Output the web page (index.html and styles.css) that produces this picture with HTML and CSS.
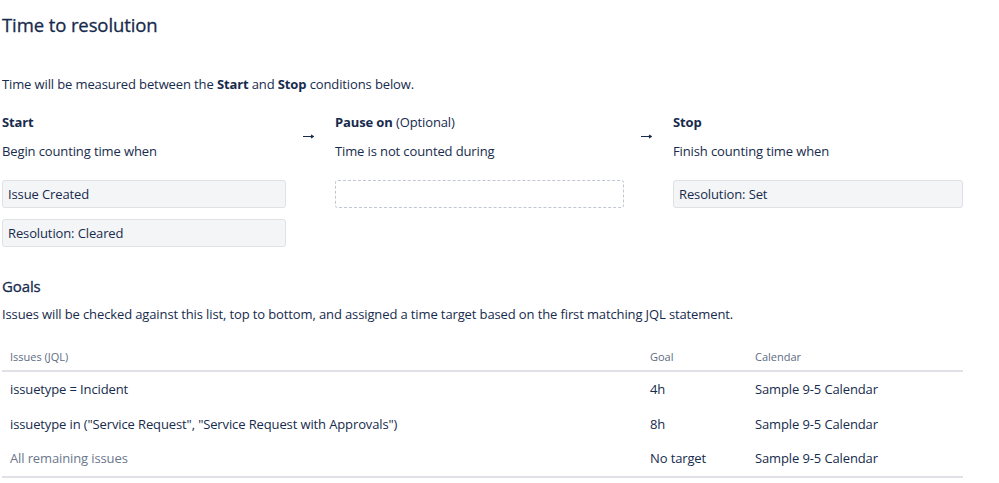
FILE: index.html
```html
<!DOCTYPE html>
<html>
<head>
<meta charset="utf-8">
<link rel="stylesheet" href="styles.css">
</head>
<body>
<div class="page">
  <h1 class="title">Time to resolution</h1>
  <p class="intro">Time will be measured between the <b>Start</b> and <b>Stop</b> conditions below.</p>

  <div class="conditions">
    <div class="col">
      <div class="label"><b>Start</b></div>
      <div class="sub">Begin counting time when</div>
      <div class="boxes">
        <div class="box">Issue Created</div>
        <div class="box">Resolution: Cleared</div>
      </div>
    </div>
    <div class="arrow"><svg width="11" height="5" viewBox="0 0 11 5"><path d="M0 2.5H10M8 1L10.3 2.5L8 4" fill="none" stroke="#172b4d" stroke-width="1.1"/></svg></div>
    <div class="col">
      <div class="label"><b>Pause on</b> (Optional)</div>
      <div class="sub">Time is not counted during</div>
      <div class="boxes">
        <div class="box empty"></div>
      </div>
    </div>
    <div class="arrow"><svg width="11" height="5" viewBox="0 0 11 5"><path d="M0 2.5H10M8 1L10.3 2.5L8 4" fill="none" stroke="#172b4d" stroke-width="1.1"/></svg></div>
    <div class="col">
      <div class="label"><b>Stop</b></div>
      <div class="sub">Finish counting time when</div>
      <div class="boxes">
        <div class="box">Resolution: Set</div>
      </div>
    </div>
  </div>

  <h2 class="goals-title">Goals</h2>
  <p class="goals-desc">Issues will be checked against this list, top to bottom, and assigned a time target based on the first matching JQL statement.</p>

  <table class="goals">
    <thead>
      <tr>
        <th class="c-jql">Issues (JQL)</th>
        <th class="c-goal">Goal</th>
        <th class="c-cal">Calendar</th>
      </tr>
    </thead>
    <tbody>
      <tr>
        <td>issuetype = Incident</td>
        <td>4h</td>
        <td>Sample 9-5 Calendar</td>
      </tr>
      <tr>
        <td>issuetype in ("Service Request", "Service Request with Approvals")</td>
        <td>8h</td>
        <td>Sample 9-5 Calendar</td>
      </tr>
      <tr class="last">
        <td class="muted">All remaining issues</td>
        <td>No target</td>
        <td>Sample 9-5 Calendar</td>
      </tr>
    </tbody>
  </table>
</div>
</body>
</html>
```

FILE: styles.css
```css
* { box-sizing: border-box; }
html, body {
  margin: 0;
  padding: 0;
  background: #fff;
}
body {
  font-family: "Open Sans", "Noto Sans", sans-serif;
  font-size: 13px;
  letter-spacing: -0.12px;
  color: #172b4d;
}
.page {
  padding: 0 2px;
  width: 965px;
}
.title {
  margin: 0;
  padding-top: 13px;
  font-size: 18.5px;
  line-height: 24px;
  font-weight: 400;
  letter-spacing: -0.1px;
  -webkit-text-stroke: 0.3px #172b4d;
  color: #172b4d;
}
.intro {
  margin: 37px 0 0;
  line-height: 20px;
}
b { font-weight: 700; }
.conditions {
  margin-top: 18px;
  display: grid;
  grid-template-columns: 284px 49px 289px 49px 290px;
}
.label, .sub {
  line-height: 20px;
}
.sub {
  margin-top: 9px;
}
.arrow {
  padding-top: 22px;
  padding-left: 17px;
  line-height: 0;
}
.boxes {
  margin-top: 19px;
  display: flex;
  flex-direction: column;
  gap: 11px;
}
.box {
  height: 28px;
  border: 1px solid #dfe1e6;
  border-radius: 3px;
  background: #f4f5f7;
  padding: 0 5px;
  line-height: 26px;
}
.box.empty {
  background: #fff;
  border: 1px dashed #c1c7d0;
}
.goals-title {
  margin: 29px 0 0;
  font-size: 15px;
  line-height: 20px;
  font-weight: 400;
  -webkit-text-stroke: 0.3px #172b4d;
}
.goals-desc {
  margin: 8px 0 0;
  line-height: 20px;
}
.goals {
  margin-top: 23px;
  width: 961px;
  border-collapse: collapse;
}
.goals th {
  text-align: left;
  font-weight: 400;
  font-size: 11px;
  letter-spacing: 0;
  color: #5e6c84;
  line-height: 20px;
  padding: 0 8px 3px;
  border-bottom: 2px solid #dfe1e6;
}
.c-jql { width: 640px; }
.c-goal { width: 105px; }
.goals td {
  padding: 7px 8px;
  line-height: 20.5px;
}
.goals tr.last td {
  border-bottom: 2px solid #dfe1e6;
}
.muted { color: #6b778c; }
```
